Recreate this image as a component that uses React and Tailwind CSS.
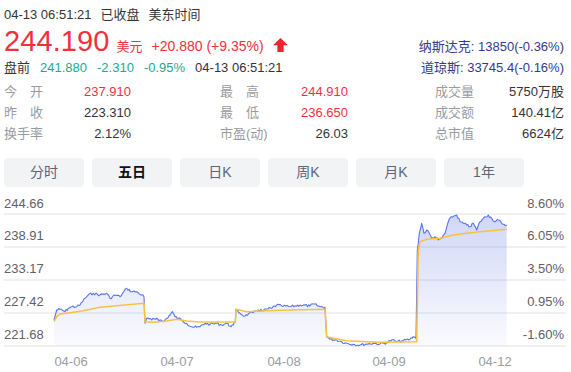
import React from "react";

const BLUE_PTS = [
  [54,320],[56.7,310],[60,309.3],[65,311.7],[68.3,308.3],[71.7,306.7],[76.7,306.7],[80,305],[85,298.3],[88.3,295],[93.3,293.3],[100,295],[106.7,293.3],[110,298.3],[115,295],[120,296.7],[126.7,288.3],[131.7,291.7],[136.7,291.7],[141.7,295],[144,296.7],
  [145,323.3],[146.7,318.3],[151.7,320],[156.7,318.3],[160,320],[163.3,321.7],[166.7,318.3],[170,315],[172.3,311.7],[175,316.7],[178.3,318.3],[181.7,320],[186.7,323.3],[191.7,326.7],[196.7,327.3],[200,326.7],[205,323.3],[210,324.3],[216.7,323.3],[221.7,325],[226.7,323.3],[230,326],[233.3,325],[235.3,321.7],
  [236,309.3],[240,313.3],[245,316],[248.3,314],[253.3,312.7],[258.3,310],[263.3,310.7],[266.7,309],[271.7,308.3],[276.7,305],[281.7,306],[290,306.7],[300,305],[310,306],[313.3,304],[320,306.7],[325,307.3],
  [326.7,336.7],[330,339.3],[336.7,340],[341.7,341.7],[346.7,343.3],[353.3,344.3],[360,345],[366.7,344],[373.3,343.3],[380,344],[386.7,342.7],[391.7,340],[396.7,341.7],[403.3,340.7],[410,339.3],[413.3,336.7],[416,338.3],
  [417.3,250],[419.3,233.3],[421.7,223.3],[424,233.3],[426.7,230],[429.3,233.3],[431.7,238.3],[435,236.7],[438.3,240],[441.7,238.3],[445,233.3],[448.3,221.7],[451.7,216.7],[456.7,215],[460,221.7],[463.3,223.3],[466.7,225],[470,226.7],[473.3,223.3],[476.7,230],[480,221.7],[483.3,218.3],[488.3,215],[491.7,218.3],[495,221.7],[498.3,220],[501.7,223.3],[506.7,225]
];

const YEL_PTS = [
  [54,321.7],[56.7,316.7],[60,314],[70,312.7],[83.3,310.7],[100,307.3],[116.7,305.7],[133.3,304.3],[144,303.3],
  [145,321.7],[153.3,322.3],[166.7,321],[176.7,319.3],[186.7,321],[200,322],[216.7,322],[235.3,322],
  [236,309.3],[246.7,311.7],[266.7,310.7],[290,310],[325,309.3],
  [326.7,336.7],[333.3,338.3],[346.7,340.7],[366.7,341.7],[380,342.3],[416.7,341.7],
  [418.3,250],[420,241.7],[426.7,239.3],[440,238.3],[453.3,235],[466.7,233.3],[480,231.7],[506.7,229.3]
];

function noisy(pts, amp) {
  const out = [];
  let seed = 7;
  const rnd = () => {
    seed = (seed * 9301 + 49297) % 233280;
    return seed / 233280 - 0.5;
  };
  for (let i = 0; i < pts.length - 1; i++) {
    const [x0, y0] = pts[i];
    const [x1, y1] = pts[i + 1];
    const dx = x1 - x0;
    if (dx < 2) {
      out.push([x0, y0]);
      continue;
    }
    const n = Math.max(1, Math.round(dx / 1.3));
    for (let k = 0; k < n; k++) {
      const t = k / n;
      const j = k === 0 ? 0 : rnd() * amp;
      out.push([x0 + dx * t, y0 + (y1 - y0) * t + j]);
    }
  }
  out.push(pts[pts.length - 1]);
  return out;
}

function toPath(pts) {
  return pts.map((p, i) => (i === 0 ? "M" : "L") + p[0].toFixed(1) + " " + p[1].toFixed(1)).join(" ");
}

function Chart() {
  const blue = noisy(BLUE_PTS, 2.6);
  const bluePath = toPath(blue);
  const fillPath = bluePath + " L506.7 346 L54 346 Z";
  const yelPath = toPath(YEL_PTS);
  const grid = [214, 247, 280, 313, 346];
  const left = [["244.66", 203], ["238.91", 235.5], ["233.17", 268], ["227.42", 301], ["221.68", 334]];
  const right = [["8.60%", 203], ["6.05%", 235.5], ["3.50%", 268.5], ["0.95%", 301.5], ["-1.60%", 334.5]];
  const xs = [["04-06", 71], ["04-07", 177], ["04-08", 284], ["04-09", 389], ["04-12", 495]];
  return (
    <svg width="571" height="185" viewBox="0 187 571 185" className="block">
      <defs>
        <linearGradient id="fillg" x1="0" y1="214" x2="0" y2="346" gradientUnits="userSpaceOnUse">
          <stop offset="0" stopColor="#6478e6" stopOpacity="0.3" />
          <stop offset="1" stopColor="#6478e6" stopOpacity="0.03" />
        </linearGradient>
      </defs>
      {grid.map((y) => (
        <line key={y} x1="4" x2="566" y1={y} y2={y} stroke="#f0f0f2" strokeWidth="2" />
      ))}
      <path d={fillPath} fill="url(#fillg)" />
      <path d={bluePath} fill="none" stroke="#5a74ee" strokeWidth="1.1" strokeLinejoin="round" />
      <path d={yelPath} fill="none" stroke="#f6c340" strokeWidth="1.6" strokeLinejoin="round" />
      <g fontFamily='"Liberation Sans", Arial, sans-serif' fontSize="13" fill="#5f6166">
        {left.map(([t, y]) => (
          <text key={t} x="4" y={y} dominantBaseline="central">{t}</text>
        ))}
        {right.map(([t, y]) => (
          <text key={t} x="564" y={y} dominantBaseline="central" textAnchor="end">{t}</text>
        ))}
      </g>
      <g fontFamily='"Liberation Sans", Arial, sans-serif' fontSize="13" fill="#9a9ca3">
        {xs.map(([t, x]) => (
          <text key={t} x={x} y="361" dominantBaseline="central" textAnchor="middle">{t}</text>
        ))}
      </g>
    </svg>
  );
}

function Spaced({ a, b }) {
  return (
    <span className="flex w-[39px] justify-between">
      <span>{a}</span>
      <span>{b}</span>
    </span>
  );
}

function Cell({ label, value, width, red }) {
  return (
    <div className={"flex justify-between " + width}>
      <span className="text-[#999ba1]">{label}</span>
      <span className={red ? "text-[#f2303d]" : "text-[#333333]"}>{value}</span>
    </div>
  );
}

export default function App() {
  const tabs = ["分时", "五日", "日K", "周K", "月K", "1年"];
  return (
    <div
      className="w-[571px] h-[372px] bg-white overflow-hidden text-[13px] text-[#333333]"
      style={{ fontFamily: '"Liberation Sans", Arial, "Noto Sans CJK SC", sans-serif' }}
    >
      <div className="px-[4px] pt-[5px] h-[25px] leading-[20px] flex gap-[9px]">
        <span>04-13 06:51:21</span>
        <span>已收盘</span>
        <span>美东时间</span>
      </div>
      <div className="flex justify-between px-[4px]">
        <div className="flex flex-col">
          <div className="flex items-baseline h-[33px] leading-[33px]">
            <span className="text-[29px] text-[#f2303d] tracking-[0.1px]">244.190</span>
            <span className="ml-[7px] text-[13px] text-[#f2303d]">美元</span>
            <span className="ml-[9px] text-[14px] text-[#f2303d]">+20.880 (+9.35%)</span>
            <svg width="15" height="14" viewBox="0 0 15 14" className="ml-[9px] self-center mt-[6px]">
              <path d="M7.5 0 L15 7.2 L10.6 7.2 L10.6 14 L4.4 14 L4.4 7.2 L0 7.2 Z" fill="#f5222d" />
            </svg>
          </div>
          <div className="flex h-[20px] leading-[20px] gap-[10px]">
            <span>盘前</span>
            <span className="text-[#1aa991]">241.880</span>
            <span className="text-[#1aa991]">-2.310</span>
            <span className="text-[#1aa991]">-0.95%</span>
            <span>04-13 06:51:21</span>
          </div>
        </div>
        <div className="flex flex-col justify-end items-end text-[#34398c] leading-[21px] pr-[3px] pb-[0px]">
          <span>纳斯达克: 13850(-0.36%)</span>
          <span>道琼斯: 33745.4(-0.16%)</span>
        </div>
      </div>
      <div className="mt-[3px] px-[4px] grid grid-cols-[216px_215px_129px] leading-[21px]">
        <Cell label={<Spaced a="今" b="开" />} value="237.910" width="w-[127px]" red />
        <Cell label={<Spaced a="最" b="高" />} value="244.910" width="w-[128px]" red />
        <Cell label="成交量" value="5750万股" width="w-[129px]" />
        <Cell label={<Spaced a="昨" b="收" />} value="223.310" width="w-[127px]" />
        <Cell label={<Spaced a="最" b="低" />} value="236.650" width="w-[128px]" red />
        <Cell label="成交额" value="140.41亿" width="w-[129px]" />
        <Cell label="换手率" value="2.12%" width="w-[127px]" />
        <Cell label="市盈(动)" value="26.03" width="w-[128px]" />
        <Cell label="总市值" value="6624亿" width="w-[129px]" />
      </div>
      <div className="mt-[14px] px-[4px] flex gap-[8px]">
        {tabs.map((t) => (
          <div
            key={t}
            className={
              "w-[80px] h-[29px] rounded-[4px] bg-[#f2f3f5] flex items-center justify-center text-[14px] " +
              (t === "五日" ? "text-[#111111] font-bold" : "text-[#5c6479]")
            }
          >
            {t}
          </div>
        ))}
      </div>
      <Chart />
    </div>
  );
}
